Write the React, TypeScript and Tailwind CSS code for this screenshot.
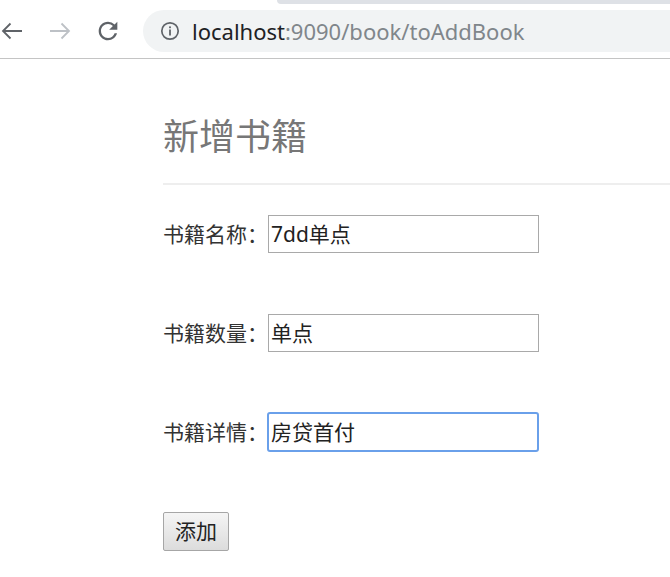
import React from "react";

const cjk = { fontFamily: '"Noto Sans", "Noto Sans CJK SC", sans-serif' };

function Back() {
  return (
    <svg width="24" height="24" viewBox="0 0 24 24" fill="none" stroke="#5f6368" strokeWidth="1.8">
      <path d="M22 12H3M10.5 4.5L3 12l7.5 7.5" />
    </svg>
  );
}
function Fwd() {
  return (
    <svg width="24" height="24" viewBox="0 0 24 24" fill="none" stroke="#bdc1c6" strokeWidth="1.8">
      <path d="M2 12h19M13.5 4.5L21 12l-7.5 7.5" />
    </svg>
  );
}
function Reload() {
  return (
    <svg width="28" height="28" viewBox="0 0 24 24">
      <path
        d="M17.65 6.35A7.958 7.958 0 0 0 12 4c-4.42 0-7.99 3.58-7.99 8s3.57 8 7.99 8c3.73 0 6.84-2.55 7.73-6h-2.08A5.99 5.99 0 0 1 12 18c-3.31 0-6-2.69-6-6s2.69-6 6-6c1.66 0 3.14.69 4.22 1.78L13 11h7V4l-2.35 2.35z"
        fill="#5f6368"
      />
    </svg>
  );
}
function Info() {
  return (
    <svg width="20" height="20" viewBox="0 0 20 20" fill="none">
      <circle cx="10" cy="10" r="8.2" stroke="#5f6368" strokeWidth="1.7" />
      <rect x="9.1" y="8.5" width="1.8" height="6" fill="#5f6368" />
      <rect x="9.1" y="5.4" width="1.8" height="1.8" fill="#5f6368" />
    </svg>
  );
}

function Row({ label, value, focused }: { label: string; value: string; focused?: boolean }) {
  return (
    <div className="flex items-center h-[38px]">
      <span className="text-[21px] text-[#333] w-[105px] leading-none" style={cjk}>
        {label}
      </span>
      <div
        className={
          focused
            ? "w-[272px] h-[40px] -ml-[1px] border-2 border-[#6aa0ea] rounded-[3px] flex items-center pl-[2px]"
            : "w-[271px] h-[38px] border border-[#a9a9a9] flex items-center pl-[2px]"
        }
      >
        <span className="text-[21px] text-[#222] leading-none" style={cjk}>
          {value}
        </span>
      </div>
    </div>
  );
}

export default function App() {
  return (
    <div className="w-[670px] h-[577px] bg-white overflow-hidden">
      <div className="h-[59px] border-b border-[#c4c4c4] bg-white">
        <div className="h-[4px] ml-[277px] bg-[#dee1e6] rounded-bl-[8px]" />
        <div className="flex items-center pt-[6px]">
          <div className="w-[143px] flex items-center">
            <div className="ml-[0px]"><Back /></div>
            <div className="ml-[24px]"><Fwd /></div>
            <div className="ml-[22px]"><Reload /></div>
          </div>
          <div className="flex-1 h-[42px] bg-[#f1f3f4] rounded-l-[21px] flex items-center pl-[17px]">
            <Info />
            <span
              className="ml-[12px] text-[22px] leading-none"
              style={{ fontFamily: '"Noto Sans", "Open Sans", sans-serif' }}
            >
              <span className="text-[#202124]">localhost</span>
              <span className="text-[#80868b]">:9090/book/toAddBook</span>
            </span>
          </div>
        </div>
      </div>
      <div className="pl-[163px] pt-[60px]">
        <h1 className="text-[36px] leading-none text-[#777]" style={cjk}>
          新增书籍
        </h1>
        <div className="mt-[28px] h-[2px] bg-[#eeeeee]" />
        <div className="mt-[30px] flex flex-col gap-[61px]">
          <Row label="书籍名称：" value="7dd单点" />
          <Row label="书籍数量：" value="单点" />
          <Row label="书籍详情：" value="房贷首付" focused />
          <div>
            <button
              className="h-[39px] px-[11px] border border-[#a6a6a6] rounded-[2px] bg-gradient-to-b from-[#f5f5f5] to-[#dcdcdc] text-[21px] text-[#222] leading-none"
              style={cjk}
            >
              添加
            </button>
          </div>
        </div>
      </div>
    </div>
  );
}
